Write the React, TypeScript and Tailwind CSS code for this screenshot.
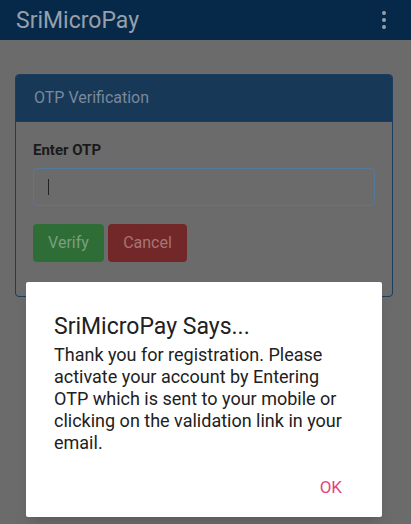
import React from "react";

const App: React.FC = () => {
    return (
        <div className="relative w-[411px] h-[524px] overflow-hidden bg-[#6b6b6b] font-['Roboto',sans-serif]">
            <div className="h-[40px] bg-[#072949] flex flex-row items-center justify-between pl-[16px] pr-[25px]">
                <p className="text-[23px] text-[#96a0ab] leading-none">SriMicroPay</p>
                <div className="flex flex-col gap-[3px]">
                    <span className="w-[4px] h-[4px] rounded-full bg-[#96a0ab]"></span>
                    <span className="w-[4px] h-[4px] rounded-full bg-[#96a0ab]"></span>
                    <span className="w-[4px] h-[4px] rounded-full bg-[#96a0ab]"></span>
                </div>
            </div>
            <div className="px-[15px] pt-[34px]">
                <div className="border border-[#1c3c60] rounded-[4px] w-[378px] h-[223px]">
                    <div className="h-[47px] bg-[#183858] flex items-center px-[18px] border-b border-[#1c3c60] rounded-t-[3px]">
                        <p className="text-[16px] text-[#7a899b]">OTP Verification</p>
                    </div>
                    <div className="px-[17px] pt-[17px]">
                        <p className="text-[15px] leading-[22px] font-bold text-[#1a1a1a]">Enter OTP</p>
                        <div className="mt-[7px] w-[342px] h-[38px] border border-[#58789a] rounded-[4px] flex items-center pl-[14px]">
                            <span className="w-[1px] h-[16px] bg-[#222]"></span>
                        </div>
                        <div className="flex flex-row gap-[4px] mt-[18px]">
                            <button className="w-[71px] h-[38px] rounded-[4px] bg-[#2e6e36] text-[#7aa07e] text-[16px]">Verify</button>
                            <button className="w-[79px] h-[38px] rounded-[4px] bg-[#722828] text-[#a87472] text-[16px]">Cancel</button>
                        </div>
                    </div>
                </div>
            </div>
            <div className="absolute left-[26px] top-[282px] w-[356px] h-[235px] bg-white rounded-[2px] shadow-lg pl-[28px] pr-[32px] pt-[31px]">
                <p className="text-[23px] text-[#212121] leading-[28px]">SriMicroPay Says...</p>
                <p className="mt-[3px] text-[18px] leading-[22px] text-[#212121]">Thank you for registration. Please activate your account by Entering OTP which is sent to your mobile or clicking on the validation link in your email.</p>
                <div className="flex justify-end mt-[23px] pr-[8px]">
                    <button className="text-[17px] leading-[20px] text-[#e2457f]">OK</button>
                </div>
            </div>
        </div>
    );
};

export default App;
